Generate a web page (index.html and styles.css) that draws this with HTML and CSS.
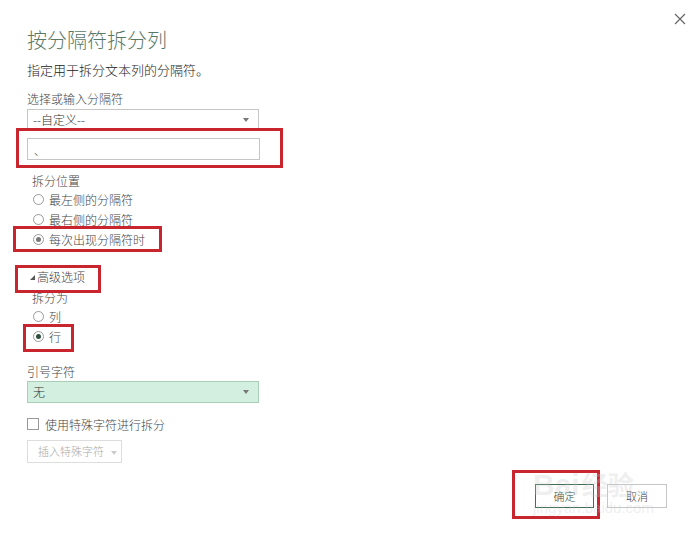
FILE: index.html
```html
<!DOCTYPE html>
<html lang="zh-CN">
<head>
  <meta charset="UTF-8" />
  <title>按分隔符拆分列</title>
  <link rel="stylesheet" href="styles.css">
</head>
<body>
  <div class="dialog">
    <span class="close">
      <svg width="12" height="12" viewBox="0 0 12 12"><path d="M1 1L11 11M11 1L1 11" stroke="#666" stroke-width="1.2"/></svg>
    </span>

    <h1 class="title">按分隔符拆分列</h1>
    <p class="desc">指定用于拆分文本列的分隔符。</p>

    <div class="label l-sep">选择或输入分隔符</div>
    <div class="select s-sep">--自定义--<span class="caret"></span></div>
    <div class="textbox">、</div>

    <div class="group">
      <div class="label l-pos">拆分位置</div>
      <div class="radio"><span class="dot"></span>最左侧的分隔符</div>
      <div class="radio"><span class="dot"></span>最右侧的分隔符</div>
      <div class="radio on"><span class="dot"></span>每次出现分隔符时</div>
    </div>

    <div class="adv"><span class="tri"></span>高级选项</div>
    <div class="group">
      <div class="label l-into">拆分为</div>
      <div class="radio"><span class="dot"></span>列</div>
      <div class="radio on dark"><span class="dot"></span>行</div>
    </div>

    <div class="label l-quote">引号字符</div>
    <div class="select green">无<span class="caret"></span></div>

    <div class="check"><span class="box"></span>使用特殊字符进行拆分</div>
    <div class="insert">插入特殊字符<span class="caret light"></span></div>

    <div class="footer">
      <button class="btn ok">确定</button>
      <button class="btn">取消</button>
    </div>

    <!-- annotation boxes -->
    <div class="mark m1"></div>
    <div class="mark m2"></div>
    <div class="mark m3"></div>
    <div class="mark m4"></div>
    <div class="mark m5"></div>

    <div class="wm">
      <div class="wm-top">Bai<span>经验</span></div>
      <div class="wm-bot">jingyan.baidu.com</div>
    </div>
  </div>
</body>
</html>
```

FILE: styles.css
```css
body { margin: 0; background: #fff; font-family: "Noto Sans CJK SC", "Noto Sans", sans-serif; font-weight: 300; color: #333; }
.dialog { position: relative; width: 697px; height: 536px; padding: 0 0 0 27px; box-sizing: border-box; overflow: hidden; }
.close { position: absolute; left: 674px; top: 6px; }

.title { margin: 0; padding-top: 28px; font-size: 20px; line-height: 24px; font-weight: 300; color: #5a7869; }
.desc { margin: 9px 0 0; font-size: 13px; line-height: 18px; color: #222; }

.label { font-size: 12px; line-height: 16px; color: #444; }
.l-sep { margin-top: 12px; }
.select { position: relative; height: 19px; margin-top: 2px; border: 1px solid #c6c6c6; font-size: 12px; line-height: 19px; padding-left: 5px; width: 225px; color: #333; }
.caret { position: absolute; right: 9px; top: 8px; border-left: 3px solid transparent; border-right: 3px solid transparent; border-top: 4px solid #777; }
.caret.light { border-top-color: #ccc; position: static; display: inline-block; margin-left: 7px; vertical-align: middle; }
.textbox { width: 225px; height: 20px; margin-top: 8px; border: 1px solid #c6c6c6; padding-left: 6px; font-size: 11px; line-height: 22px; color: #555; }

.group { padding-left: 5px; }
.l-pos { margin-top: 13px; }
.radio { display: flex; align-items: center; height: 20px; font-size: 12px; color: #444; }
.radio .dot { width: 9px; height: 9px; border: 1px solid #9a9a9a; border-radius: 50%; margin: 0 5px 0 1px; position: relative; background: #fff; }
.radio.on .dot::after { content: ""; position: absolute; left: 2px; top: 2px; width: 5px; height: 5px; border-radius: 50%; background: #777; }
.radio.dark .dot::after { background: #2f4f3c; }

.adv { display: flex; align-items: center; margin-top: 19px; height: 16px; font-size: 12px; color: #444; }
.tri { width: 0; height: 0; border-left: 5px solid transparent; border-bottom: 5px solid #555; margin: 2px 2px 0 3px; }
.l-into { margin-top: 6px; }

.l-quote { margin-top: 18px; }
.select.green { background: #d3efdf; border-color: #a9cfb8; height: 20px; line-height: 20px; margin-top: 1px; }

.check { display: flex; align-items: center; margin-top: 13px; height: 16px; font-size: 12px; color: #444; }
.box { width: 10px; height: 10px; border: 1px solid #999; margin-right: 6px; }
.insert { margin-top: 8px; width: 83px; height: 21px; border: 1px solid #ddd; font-size: 11px; line-height: 21px; color: #aaa; padding-left: 10px; }

.footer { display: flex; justify-content: flex-end; gap: 13px; margin: 21px 30px 0 0; }
.btn { width: 60px; height: 24px; background: #fff; border: 1px solid #c6c6c6; font-family: inherit; font-weight: 300; font-size: 11px; color: #444; padding: 0; }
.btn.ok { border-color: #3f6c54; width: 59px; color: #2f4f3c; }

.mark { position: absolute; border: 3px solid #c8252f; box-sizing: border-box; }
.m1 { left: 16px; top: 128px; width: 267px; height: 40px; }
.m2 { left: 13px; top: 226px; width: 149px; height: 26px; }
.m3 { left: 15px; top: 265px; width: 86px; height: 28px; }
.m4 { left: 23px; top: 324px; width: 51px; height: 28px; }
.m5 { left: 512px; top: 470px; width: 88px; height: 49px; }

.wm { position: absolute; left: 533px; top: 468px; color: rgba(200,200,200,0.3); font-family: "Liberation Sans", sans-serif; pointer-events: none; }
.wm-top { font-size: 30px; line-height: 32px; font-weight: bold; }
.wm-top span { font-family: "Noto Sans CJK SC", sans-serif; font-size: 26px; margin-left: 2px; }
.wm-bot { font-size: 15px; line-height: 14px; }
```
